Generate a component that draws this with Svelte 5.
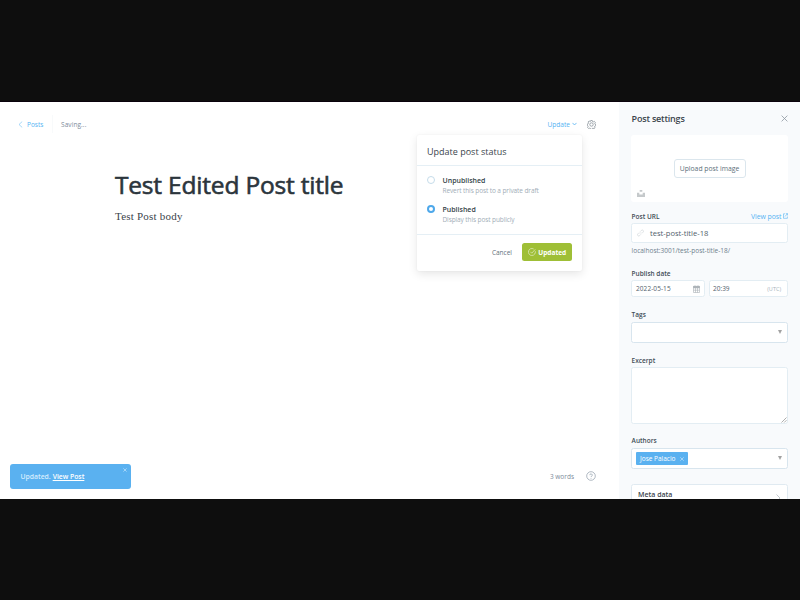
<script>
  let status = $state('published');
  const options = [
    { id: 'unpublished', title: 'Unpublished', note: 'Revert this post to a private draft' },
    { id: 'published', title: 'Published', note: 'Display this post publicly' }
  ];
</script>

<div class="screen">
  <div class="app">
    <main>
      <header>
        <a class="back" href="#posts">
          <svg width="5" height="7" viewBox="0 0 5 7"><path d="M4.200.6 1 3.500l3.200 2.900" /></svg>
          <span>Posts</span>
        </a>
        <span class="saving">Saving...</span>
        <div class="update">
          <span>Update</span>
          <svg width="5" height="4" viewBox="0 0 5 4"><path d="M.5.9 2.500 3 4.500.9" /></svg>
        </div>
        <svg class="gear" width="9" height="9" viewBox="0 0 20 20">
          <path d="M8.300 1h3.400l.7 2.600 1.500.7 2.400-1.300 2.200 2.500-1.200 2.300.4 1.500 2 .7v2.400l-2.200.9-.6 1.500 1 2.300-2.300 2.100-2.300-1.100-1.400.6-.9 2.300H8.300l-.8-2.400-1.500-.6-2.300 1.100-2.300-2.300 1.200-2.300-.6-1.500L.6 12V9l2.200-1 .6-1.500-1-2.200 2.200-2.200 2.300 1.300.9-.3z" />
          <circle cx="10" cy="10" r="3.800" />
        </svg>
      </header>

      <article>
        <h1>Test Edited Post title</h1>
        <p>Test Post body</p>
      </article>

      <footer>
        <span>3 words</span>
        <svg width="10" height="10" viewBox="0 0 10 10">
          <circle cx="5" cy="5" r="4.300" />
          <path d="M3.700 4.100a1.300 1.200 0 1 1 1.900 1.100q-.6.3-.6.9M5 7v.7" />
        </svg>
      </footer>

      <section class="menu">
        <h2>Update post status</h2>
        <div class="options">
          {#each options as o}
            <button class="option" onclick={() => (status = o.id)}>
              <i class:on={status === o.id}></i>
              <span><b>{o.title}</b><small>{o.note}</small></span>
            </button>
          {/each}
        </div>
        <div class="actions">
          <span class="cancel">Cancel</span>
          <button class="done">
            <svg width="8" height="8" viewBox="0 0 8 8"><path d="M7.300 3.200A3.500 3.500 0 1 1 5.700 1M2.300 3.700l1.500 1.500 3.500-3.900" /></svg>
            <span>Updated</span>
          </button>
        </div>
      </section>

      <aside class="toast">
        <span>Updated.</span> <a href="#view">View Post</a>
        <svg width="4" height="4" viewBox="0 0 4 4"><path d="m.4.4 3.200 3.200m0-3.200L.4 3.600" /></svg>
      </aside>
    </main>

    <aside class="settings">
      <div class="head">
        <h3>Post settings</h3>
        <svg width="7" height="7" viewBox="0 0 8 8"><path d="m.7.7 6.600 6.600m0-6.600L.7 7.300" /></svg>
      </div>

      <div class="upload">
        <button>Upload post image</button>
        <svg width="8" height="7" viewBox="0 0 8 7"><path d="M2.700 0h2.600v1.700H2.700zM0 2.800h2.300v1.700h3.400V2.800H8V7H0z" /></svg>
      </div>

      <div class="label url">
        <b>Post URL</b>
        <a href="#post">View post
          <svg width="5" height="6" viewBox="0 0 5 6"><path d="M2 .8H.5v4.500h3.900V3.500M2 3.500 4.400.7M2.800.6h1.700v1.800" /></svg>
        </a>
      </div>
      <div class="field slug">
        <svg width="7" height="8" viewBox="0 0 8 8"><path d="m3.200 4.800 1.600-1.600M3.500 2.500 5 1a1.300 1.300 0 0 1 2 2L5.500 4.500M2.500 3.500 1 5a1.300 1.300 0 0 0 2 2l1.500-1.500" /></svg>
        <span>test-post-title-18</span>
      </div>
      <div class="hint">localhost:3001/test-post-title-18/</div>

      <div class="label date"><b>Publish date</b></div>
      <div class="when">
        <div class="field day">
          <span>2022-05-15</span>
          <svg width="7" height="8" viewBox="0 0 7 8"><path class="bar" d="M.5 1.300h6v1.600h-6z" /><path d="M.5 1.500h6v6h-6zM2 .3v2M5 .3v2M2.500 3v4.500M4.500 3v4.500M.5 5.200h6" /></svg>
        </div>
        <div class="field time"><span>20:39</span><small>(UTC)</small></div>
      </div>

      <div class="label tags"><b>Tags</b></div>
      <div class="field select"><span></span><i></i></div>

      <div class="label excerpt"><b>Excerpt</b></div>
      <div class="field area">
        <svg width="6" height="6" viewBox="0 0 6 6"><path d="M.5 5.500l5-5M3.200 5.500l2.300-2.300" /></svg>
      </div>

      <div class="label authors"><b>Authors</b></div>
      <div class="field select">
        <span class="chip">Jose Palacio
          <svg width="4" height="4" viewBox="0 0 4 4"><path d="m.3.3 3.400 3.400m0-3.400L.3 3.700" /></svg>
        </span>
        <i></i>
      </div>

      <div class="meta">
        <b>Meta data</b>
        <svg width="5" height="8" viewBox="0 0 5 8"><path d="m.5.5 3.500 3.500-3.500 3.500" /></svg>
      </div>
    </aside>
  </div>
</div>

<style>
  :global(body) { margin: 0; background: #0e0e0e; }
  .screen {
    box-sizing: border-box; width: 800px; height: 600px; padding-top: 102px; overflow: hidden;
    background: #0e0e0e; font-family: "Open Sans", "Noto Sans", sans-serif; font-size: 6.500px; color: #7c8b9a;
  }
  .screen :global(*) { box-sizing: border-box; }
  .app { display: flex; height: 397px; background: #fff; box-shadow: 0 -1px #0a020c; }
  svg { display: block; flex: none; fill: none; stroke: currentColor; stroke-width: .6; }
  a { color: #55b3f3; text-decoration: none; }
  button { font: inherit; color: inherit; margin: 0; padding: 0; border: 0; background: none; }
  h1, h2, h3, p { margin: 0; }
  span, b, a { white-space: nowrap; }

  main { position: relative; display: flex; flex-direction: column; width: 619px; flex: none; }
  header { display: flex; align-items: center; height: 44px; padding: 0 23px 0 18px; }
  .back { display: flex; align-items: center; gap: 4px; width: 35px; height: 18px; border-right: 1px solid #f8fafb; }
  .back svg { stroke-width: .5; }
  .saving { margin-left: 8px; letter-spacing: .08px; }
  .update { display: flex; align-items: center; gap: 2px; margin-left: auto; color: #55b3f3; font-size: 6.600px; }
  .update svg { stroke-width: .8; }
  .gear { margin-left: 10px; color: #66727c; stroke-width: 1.300; }

  article { flex: 1; padding: 20px 0 0 115px; }
  h1 { height: 38px; font-size: 24.500px; line-height: 37px; font-weight: 400; color: #2b353c; white-space: nowrap; letter-spacing: -.19px; -webkit-text-stroke: .6px #2b353c; }
  p { margin-top: 3px; font: 11px/18px "Liberation Serif", serif; color: #3a434a; letter-spacing: .22px; }
  footer { display: flex; align-items: center; justify-content: flex-end; gap: 12px; height: 46px; padding-right: 23px; }

  .menu {
    position: absolute; left: 417px; top: 33px; width: 165px; height: 136px; background: #fff;
    border-radius: 2px; box-shadow: 0 0 2px rgba(0,0,0,.06), 0 3px 10px rgba(0,0,0,.1);
  }
  h2 { height: 31px; padding-left: 10px; line-height: 33px; font-size: 9px; font-weight: 400; color: #3b454d; border-bottom: 1px solid #e5eff5; }
  .options { display: flex; flex-direction: column; gap: 9px; height: 69px; padding: 9.500px 10px 0; border-bottom: 1px solid #e5eff5; }
  .option { display: flex; align-items: flex-start; gap: 7.500px; height: 20px; text-align: left; }
  .option i { width: 8px; height: 8px; border: 1px solid #c5dcea; border-radius: 50%; }
  .option i.on { border: 2px solid #4ea8ea; }
  .option span { display: flex; flex-direction: column; }
  .option b { height: 10px; line-height: 10px; font-size: 7px; font-weight: 600; color: #343f47; }
  .option small { height: 10px; line-height: 10px; font-size: 6.500px; color: #a1adb7; letter-spacing: -.1px; }
  .actions { display: flex; align-items: center; justify-content: flex-end; gap: 10px; height: 35px; padding: 0 10px 1px 0; }
  .cancel { color: #63727e; }
  .done { display: flex; align-items: center; justify-content: center; gap: 2.500px; width: 50px; height: 18px; border-radius: 2.500px; background: #9fbf36; color: #fff; font-weight: 700; }
  .done svg { stroke-width: .5; }

  .toast {
    position: absolute; left: 10px; top: 362px; display: flex; align-items: center; gap: 2px; width: 121px; height: 25px;
    padding-left: 10.500px; border-radius: 3px; background: #5ab1f0; color: #d5edfe; font-weight: 600; font-size: 6.800px;
  }
  .toast a { color: #fff; text-decoration: underline; }
  .toast svg { align-self: flex-start; margin: 4px 4px 0 auto; }

  .settings { width: 181px; flex: none; padding: 0 12px; background: #f8fafc; overflow: hidden; }
  .head { display: flex; align-items: center; justify-content: space-between; height: 33px; padding-bottom: 1px; }
  h3 { padding-left: .6px; font-size: 9px; font-weight: 600; color: #3b454d; letter-spacing: -.2px; }
  .head svg { color: #8c979f; stroke-width: .9; }
  .upload { position: relative; display: flex; align-items: center; justify-content: center; height: 67px; background: #fff; border-radius: 3px; }
  .upload button { width: 72px; height: 19px; border: 1px solid #dbe6ed; border-radius: 3px; font-size: 6.800px; color: #5e6f7a; white-space: nowrap; }
  .upload svg { position: absolute; left: 6px; bottom: 5px; fill: #c5c9cb; stroke: none; }

  .label { display: flex; align-items: center; justify-content: space-between; height: 14px; margin-top: 9px; padding-left: .6px; }
  .label b { font-size: 6.500px; font-weight: 600; color: #414d56; }
  .label.url { margin-top: 7px; }
  .label a { display: flex; align-items: center; gap: 1.500px; font-size: 6.900px; letter-spacing: -.04px; }
  .field { display: flex; align-items: center; background: #fff; border: 1px solid #e3edf3; border-radius: 2.500px; color: #52616c; }
  .slug { height: 20px; padding: 0 0 1px 5px; gap: 6px; font-size: 7.600px; }
  .slug svg { color: #c4cbd0; }
  .hint { height: 13px; padding-left: .6px; line-height: 15px; color: #6e808d; white-space: nowrap; }
  .date { margin-top: 10px; }
  .when { display: flex; gap: 4px; }
  .day, .time { justify-content: space-between; height: 17px; padding: 0 4px; }
  .day { width: 74px; letter-spacing: .08px; }
  .day svg { color: #a9b0b5; }
  .bar { fill: currentColor; }
  .time { flex: 1; padding: 0 6px 0 3px; }
  .time small { font-size: 5.500px; color: #a9b4bc; }
  .tags { margin-top: 11px; padding-bottom: 1px; }
  .select { justify-content: space-between; height: 21px; padding: 0 5px 0 4px; border-color: #d8e5ee; }
  .select i { width: 0; height: 0; margin-bottom: 1px; border: 2.500px solid transparent; border-top: 4px solid #a2a2a2; border-bottom: 0; }
  .excerpt { margin-top: 10px; }
  .area { height: 57px; align-items: flex-end; justify-content: flex-end; color: #777; }
  .authors { margin-top: 10px; padding-bottom: 1px; }
  .chip { display: flex; align-items: center; justify-content: space-between; width: 52px; height: 13px; padding: 0 4px; border-radius: 1px; background: #5ab1f0; color: #fff; font-size: 6.500px; }
  .chip svg { stroke-width: .45; }
  .meta { display: flex; justify-content: space-between; height: 30px; margin-top: 15px; padding: 5px 6px; background: #fff; border: 1px solid #e0eaf1; border-radius: 2.500px; color: #9ca6ae; }
  .meta b { line-height: 10px; font-size: 7px; font-weight: 600; color: #3b454d; }
  .meta svg { margin-top: 4px; }
</style>
